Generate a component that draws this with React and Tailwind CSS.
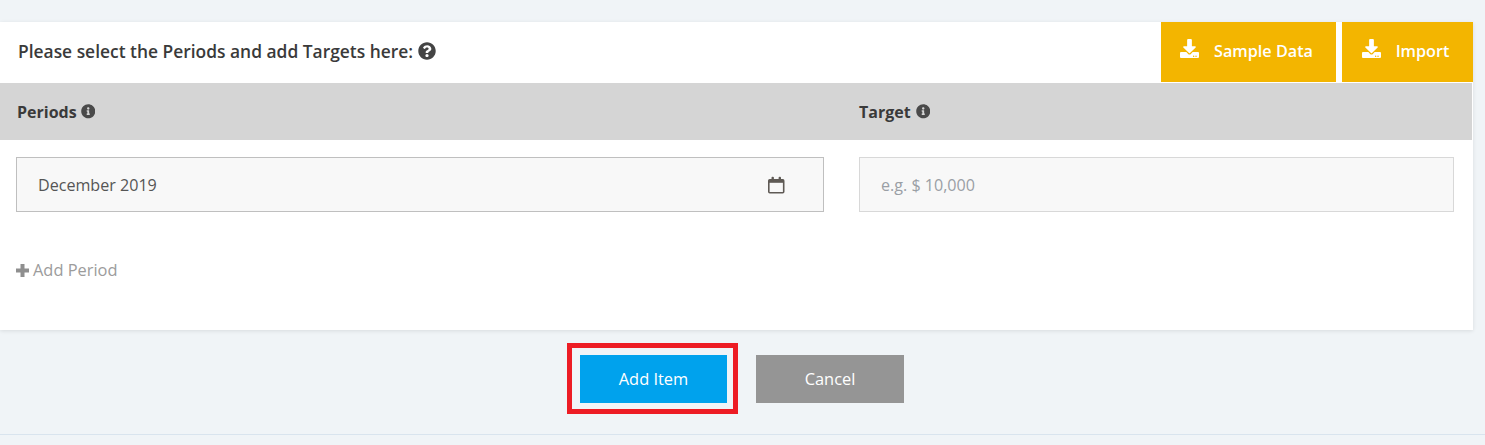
import React from "react";
import { FaDownload, FaInfoCircle, FaQuestionCircle } from "react-icons/fa";

function ActionButton({ label, className }) {
  return (
    <button className={`flex h-[60px] items-center justify-center bg-[#f3b500] pb-[2px] pr-[4px] text-[16.2px] font-semibold text-white ${className}`}>
      <FaDownload className="mr-[15px] mb-[5px] text-[19px]" />
      {label}
    </button>
  );
}

// calendar with the two pegs on top, no matching icon in the packages
function CalendarIcon() {
  return (
    <svg width="18" height="18" viewBox="0 0 18 18" className="text-[#5f5a55]">
      <rect x="1.8" y="3.8" width="14.9" height="13" rx="1" fill="none" stroke="currentColor" strokeWidth="1.6" />
      <rect x="1.8" y="3.8" width="14.9" height="3" fill="currentColor" />
      <rect x="4.5" y="0.8" width="2.4" height="4" rx="1" fill="currentColor" />
      <rect x="11.6" y="0.8" width="2.4" height="4" rx="1" fill="currentColor" />
    </svg>
  );
}

function App() {
  return (
    <div className="h-[445px] overflow-hidden bg-[#f0f4f7] pt-[22px] font-['Open_Sans',sans-serif] text-[#3c3c3c]">
      {/* card */}
      <div className="h-[308px] w-[1473px] bg-white shadow-[0_1px_4px_rgba(0,0,0,0.1)]">
        <div className="flex h-[60px] items-center justify-between">
          <div className="flex items-center pb-[2px] pl-[18px] text-[17.4px] font-semibold text-[#3a3a3a]">
            Please select the Periods and add Targets here:
            <FaQuestionCircle className="ml-[5px] text-[18px] text-[#444]" />
          </div>
          <div className="flex gap-[6px]">
            <ActionButton label="Sample Data" className="w-[175px]" />
            <ActionButton label="Import" className="w-[131px]" />
          </div>
        </div>

        <div className="mt-px flex h-[57px] w-[1472px] items-center bg-[#d5d5d5] text-[16px] font-bold text-[#3a3a3a]">
          <div className="flex w-[859px] items-center pl-[17px]">
            Periods
            <FaInfoCircle className="ml-[4px] text-[14.5px] text-[#4a4a4a]" />
          </div>
          <div className="flex items-center">
            Target
            <FaInfoCircle className="ml-[5px] text-[14.5px] text-[#4a4a4a]" />
          </div>
        </div>

        <div className="mt-[17px] flex">
          <div className="ml-[16px] flex h-[55px] w-[808px] items-center justify-between border border-[#bfbfbf] bg-[#f8f8f8] pl-[21px] pr-[38px] text-[16.1px] text-[#555]">
            <span className="pt-px">December 2019</span>
            <CalendarIcon />
          </div>
          <div className="ml-[35px] flex h-[55px] w-[595px] items-center border border-[#d8d8d8] bg-[#f8f8f8] pl-[21px] pt-px text-[16.1px] text-[#9a9fa5]">
            e.g. $ 10,000
          </div>
        </div>

        <div className="mt-[46px] flex items-center pl-[16px] text-[16.4px] text-[#9c9c9c]">
          <svg width="13" height="13" viewBox="0 0 13 13" className="mr-[4px] text-[#8f8f8f]">
            <path d="M4.5 0h4v4.5H13v4H8.5V13h-4V8.5H0v-4h4.5z" fill="currentColor" />
          </svg>
          Add Period
        </div>
      </div>

      {/* actions */}
      <div className="mt-[25px] flex justify-center gap-[29px] pr-px">
        <div className="relative">
          <button className="flex h-[48px] w-[147px] items-center justify-center bg-[#00a2ed] text-[16.4px] text-white">Add Item</button>
          <div className="absolute -bottom-[11px] -left-[13px] -right-[11px] -top-[12px] border-[5px] border-[#ed1c24]" />
        </div>
        <button className="flex h-[48px] w-[148px] items-center justify-center bg-[#959595] text-[16.4px] text-white">Cancel</button>
      </div>

      <div className="mt-[31px] border-t border-[#d9e4ee]" />
    </div>
  );
}

export default App;
